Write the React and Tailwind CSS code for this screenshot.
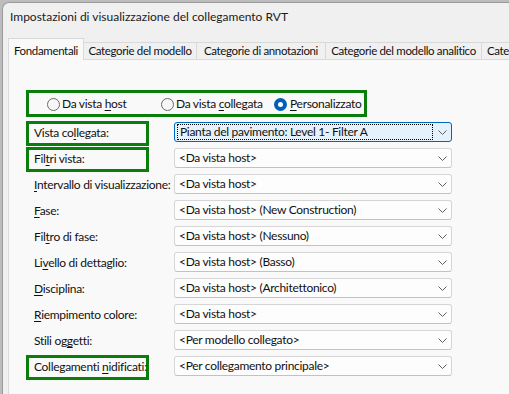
import React from "react";

const U = ({ children }) => <span className="underline underline-offset-[2px] decoration-[1px]">{children}</span>;

function Chevron() {
  return (
    <svg width="9" height="5" viewBox="0 0 9 5" className="shrink-0">
      <path d="M0.5 0.5 L4.5 4.5 L8.5 0.5" fill="none" stroke="#5f5f5f" strokeWidth="1" />
    </svg>
  );
}

function Radio({ checked }) {
  if (checked) {
    return (
      <span className="w-[13px] h-[13px] rounded-full bg-[#005fb8] flex items-center justify-center shrink-0">
        <span className="w-[5px] h-[5px] rounded-full bg-white" />
      </span>
    );
  }
  return <span className="w-[13px] h-[13px] rounded-full border border-[#6a6a6a] bg-[#f7f7f7] shrink-0" />;
}

function Dropdown({ value, focused }) {
  if (focused) {
    return (
      <div className="w-[278px] h-[20px] rounded-[3px] border border-[#0067c0] bg-[#e5f1fb] flex items-center pl-[2px] pr-[4px] mt-[1px]">
        <div className="w-[256px] h-[16px] border border-dotted border-black flex items-center pl-[2px] leading-none">{value}</div>
        <div className="flex-1 flex justify-end"><Chevron /></div>
      </div>
    );
  }
  return (
    <div className="w-[278px] h-[20px] rounded-[3px] border border-[#d6d6d6] border-b-[#c2c2c2] bg-[#fdfdfd] flex items-center pl-[4px] pr-[4px] mt-[1px] justify-between leading-none">
      <span>{value}</span>
      <Chevron />
    </div>
  );
}

function Row({ label, value, boxed, focused }) {
  return (
    <div className="flex h-[26px] items-start">
      <div className={"w-[123px] h-[25px] border-[3px] flex items-center pl-[5px] pb-[1px] " + (boxed ? "border-[#0a7e0a]" : "border-transparent")}>
        <span className="whitespace-nowrap">{label}</span>
      </div>
      <div className="ml-[25px]">
        <Dropdown value={value} focused={focused} />
      </div>
    </div>
  );
}

export default function App() {
  const tabs = [
    ["Categorie del modello", "w-[113px] justify-center"],
    ["Categorie di annotazioni", "w-[129px] justify-center"],
    ["Categorie del modello analitico", "w-[156px] justify-center"],
    ["Categorie", "w-[80px] justify-start pl-[5px]"],
  ];
  return (
    <div className="w-[509px] h-[394px] overflow-hidden bg-[#bdbdbd] pl-[2px] pt-[2px] text-[12px] tracking-[-0.3px] text-[#111] [font-family:Lato,'Liberation_Sans',sans-serif]">
      <div className="w-[560px] h-[400px] bg-[#f0f0f0] rounded-tl-[7px] border-l border-t border-[#9a9a9a] flex flex-col">
        <div className="h-[34px] pl-[7px] pt-[5px] text-[12px] tracking-normal text-[#1a1a1a] whitespace-nowrap">
          Impostazioni di visualizzazione del collegamento RVT
        </div>
        <div className="flex items-end pl-[5px] h-[23px] relative z-10 text-[11.5px] tracking-[-0.35px]">
          <div className="w-[79px] h-[22px] bg-[#f9f9f9] border border-b-0 border-[#d9d9d9] flex justify-center items-start pt-[3px] whitespace-nowrap">
            Fondamentali
          </div>
          {tabs.map(([t, w]) => (
            <div key={t} className={w + " h-[18px] shrink-0 px-[4px] bg-[#f0f0f0] border border-l-0 border-[#d9d9d9] flex items-center whitespace-nowrap"}>
              {t}
            </div>
          ))}
        </div>
        <div className="ml-[5px] -mt-px flex-1 bg-[#f9f9f9] border-l border-t border-[#d9d9d9] pl-[17px] pt-[30px]">
          <div className="w-[341px] h-[27px] border-[3px] border-[#0a7e0a] flex items-center pl-[18px] pt-[1px]">
            <div className="w-[114px] flex items-center gap-[2px] whitespace-nowrap">
              <Radio />
              <span>Da vista <U>h</U>ost</span>
            </div>
            <div className="w-[113px] flex items-center gap-[2px] whitespace-nowrap">
              <Radio />
              <span>Da vista <U>c</U>ollegata</span>
            </div>
            <div className="flex items-center gap-[3px] whitespace-nowrap">
              <Radio checked />
              <span><U>P</U>ersonalizzato</span>
            </div>
          </div>
          <div className="mt-[4px] flex flex-col">
            <Row boxed focused label={<>Vista co<U>l</U>legata:</>} value="Pianta del pavimento: Level 1- Filter A" />
            <Row boxed label={<>Fil<U>t</U>ri vista:</>} value="<Da vista host>" />
            <Row label={<><U>I</U>ntervallo di visualizzazione:</>} value="<Da vista host>" />
            <Row label={<><U>F</U>ase:</>} value="<Da vista host> (New Construction)" />
            <Row label={<>Fil<U>t</U>ro di fase:</>} value="<Da vista host> (Nessuno)" />
            <Row label={<>Li<U>v</U>ello di dettaglio:</>} value="<Da vista host> (Basso)" />
            <Row label={<><U>D</U>isciplina:</>} value="<Da vista host> (Architettonico)" />
            <Row label={<><U>R</U>iempimento colore:</>} value="<Da vista host>" />
            <Row label={<>Stili og<U>g</U>etti:</>} value="<Per modello collegato>" />
            <Row boxed label={<>Collegamenti <U>n</U>idificati:</>} value="<Per collegamento principale>" />
          </div>
        </div>
      </div>
    </div>
  );
}
